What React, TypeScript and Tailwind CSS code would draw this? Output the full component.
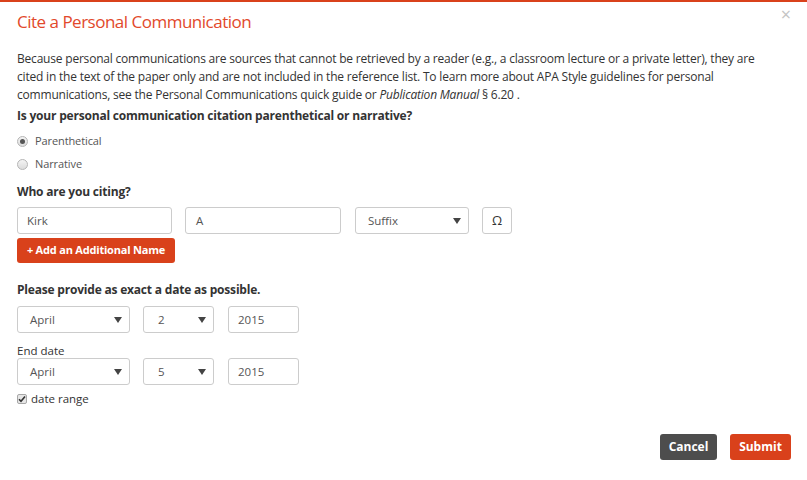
import React from "react";

const Arrow = () => (
  <svg width="8" height="6" viewBox="0 0 8 6" className="absolute right-[7px] top-[10px]">
    <path d="M0 0 L8 0 L4 6 Z" fill="#444" />
  </svg>
);

function Select({ w, pl, value }: { w: string; pl: string; value: string }) {
  return (
    <div className={`relative ${w} h-[27px] border border-[#ccc] rounded-[3px] bg-white flex items-center ${pl} text-[11.5px] text-[#555]`}>
      {value}
      <Arrow />
    </div>
  );
}

function Input({ w, pl, value }: { w: string; pl: string; value: string }) {
  return (
    <div className={`${w} h-[27px] border border-[#ccc] rounded-[3px] bg-white flex items-center ${pl} text-[11.5px] text-[#555]`}>
      {value}
    </div>
  );
}

function Radio({ checked, label }: { checked?: boolean; label: string }) {
  return (
    <div className="h-[22px] flex items-center">
      <div className="w-[11px] h-[11px] rounded-full border border-[#b5b5b5] bg-gradient-to-b from-[#f4f4f4] to-[#dcdcdc] flex items-center justify-center">
        {checked && <div className="w-[5px] h-[5px] rounded-full bg-[#555]" />}
      </div>
      <span className="ml-[7px] text-[11px] tracking-[-0.1px] text-[#555]">{label}</span>
    </div>
  );
}

export default function App() {
  return (
    <div
      className="w-[807px] h-[480px] bg-white relative overflow-hidden text-[#333]"
      style={{ fontFamily: "'Open Sans', 'Noto Sans', sans-serif" }}
    >
      <div className="h-[2px] bg-[#d9411b]" />
      <div className="absolute right-[16px] top-[4px] text-[18px] text-[#c4c4c4] leading-[20px]">×</div>
      <div className="px-[17px]">
        <div className="mt-[8px] h-[24px] leading-[24px] text-[17px] tracking-[-0.5px] text-[#e2492b]">
          Cite a Personal Communication
        </div>
        <p className="mt-[16px] text-[12px] tracking-[-0.2px] leading-[18px] text-[#333] pr-[20px]">
          Because personal communications are sources that cannot be retrieved by a reader (e.g., a classroom lecture or a private letter), they are cited in the text of the paper only and are not included in the reference list. To learn more about APA Style guidelines for personal communications, see the Personal Communications quick guide or <i>Publication Manual</i> § 6.20 .
        </p>
        <div className="mt-[3px] h-[18px] leading-[18px] text-[12px] tracking-[-0.2px] font-bold text-[#333]">
          Is your personal communication citation parenthetical or narrative?
        </div>
        <div className="mt-[5px] flex flex-col gap-[1px]">
          <Radio checked label="Parenthetical" />
          <Radio label="Narrative" />
        </div>
        <div className="mt-[8px] h-[18px] leading-[18px] text-[12px] tracking-[-0.2px] font-bold text-[#333]">
          Who are you citing?
        </div>
        <div className="mt-[6px] flex">
          <Input w="w-[155px]" pl="pl-[9px]" value="Kirk" />
          <div className="ml-[13px]">
            <Input w="w-[156px]" pl="pl-[10px]" value="A" />
          </div>
          <div className="ml-[14px]">
            <Select w="w-[114px]" pl="pl-[12px]" value="Suffix" />
          </div>
          <div className="ml-[13px] w-[30px] h-[27px] border border-[#ccc] rounded-[3px] flex items-center justify-center text-[13px] text-[#333]">
            Ω
          </div>
        </div>
        <div className="mt-[4px] w-[158px] h-[25px] rounded-[3px] bg-[#d9411b] text-white text-[11px] tracking-[-0.2px] font-bold flex items-center justify-center">
          + Add an Additional Name
        </div>
        <div className="mt-[18px] h-[18px] leading-[18px] text-[12px] tracking-[-0.2px] font-bold text-[#333]">
          Please provide as exact a date as possible.
        </div>
        <div className="mt-[7px] flex">
          <Select w="w-[113px]" pl="pl-[12px]" value="April" />
          <div className="ml-[13px]">
            <Select w="w-[71px]" pl="pl-[14px]" value="2" />
          </div>
          <div className="ml-[14px]">
            <Input w="w-[71px]" pl="pl-[9px]" value="2015" />
          </div>
        </div>
        <div className="mt-[11px] h-[14px] leading-[14px] text-[11.5px] text-[#333]">End date</div>
        <div className="flex">
          <Select w="w-[113px]" pl="pl-[12px]" value="April" />
          <div className="ml-[13px]">
            <Select w="w-[71px]" pl="pl-[14px]" value="5" />
          </div>
          <div className="ml-[14px]">
            <Input w="w-[71px]" pl="pl-[9px]" value="2015" />
          </div>
        </div>
        <div className="mt-[6px] h-[16px] flex items-center">
          <div className="w-[10px] h-[10px] rounded-[2px] border border-[#a8a8a8] bg-[#e6e6e6] flex items-center justify-center">
            <svg width="8" height="8" viewBox="0 0 8 8">
              <path d="M1 4.2 L3 6.3 L7 1.5" stroke="#333" strokeWidth="1.6" fill="none" />
            </svg>
          </div>
          <span className="ml-[4px] text-[11.5px] text-[#333]">date range</span>
        </div>
      </div>
      <div className="absolute right-[16px] top-[434px] flex gap-[13px]">
        <div className="w-[57px] h-[26px] rounded-[3px] bg-[#4d4d4d] text-white text-[12px] font-bold flex items-center justify-center">
          Cancel
        </div>
        <div className="w-[61px] h-[26px] rounded-[3px] bg-[#d9411b] text-white text-[12px] font-bold flex items-center justify-center">
          Submit
        </div>
      </div>
    </div>
  );
}
